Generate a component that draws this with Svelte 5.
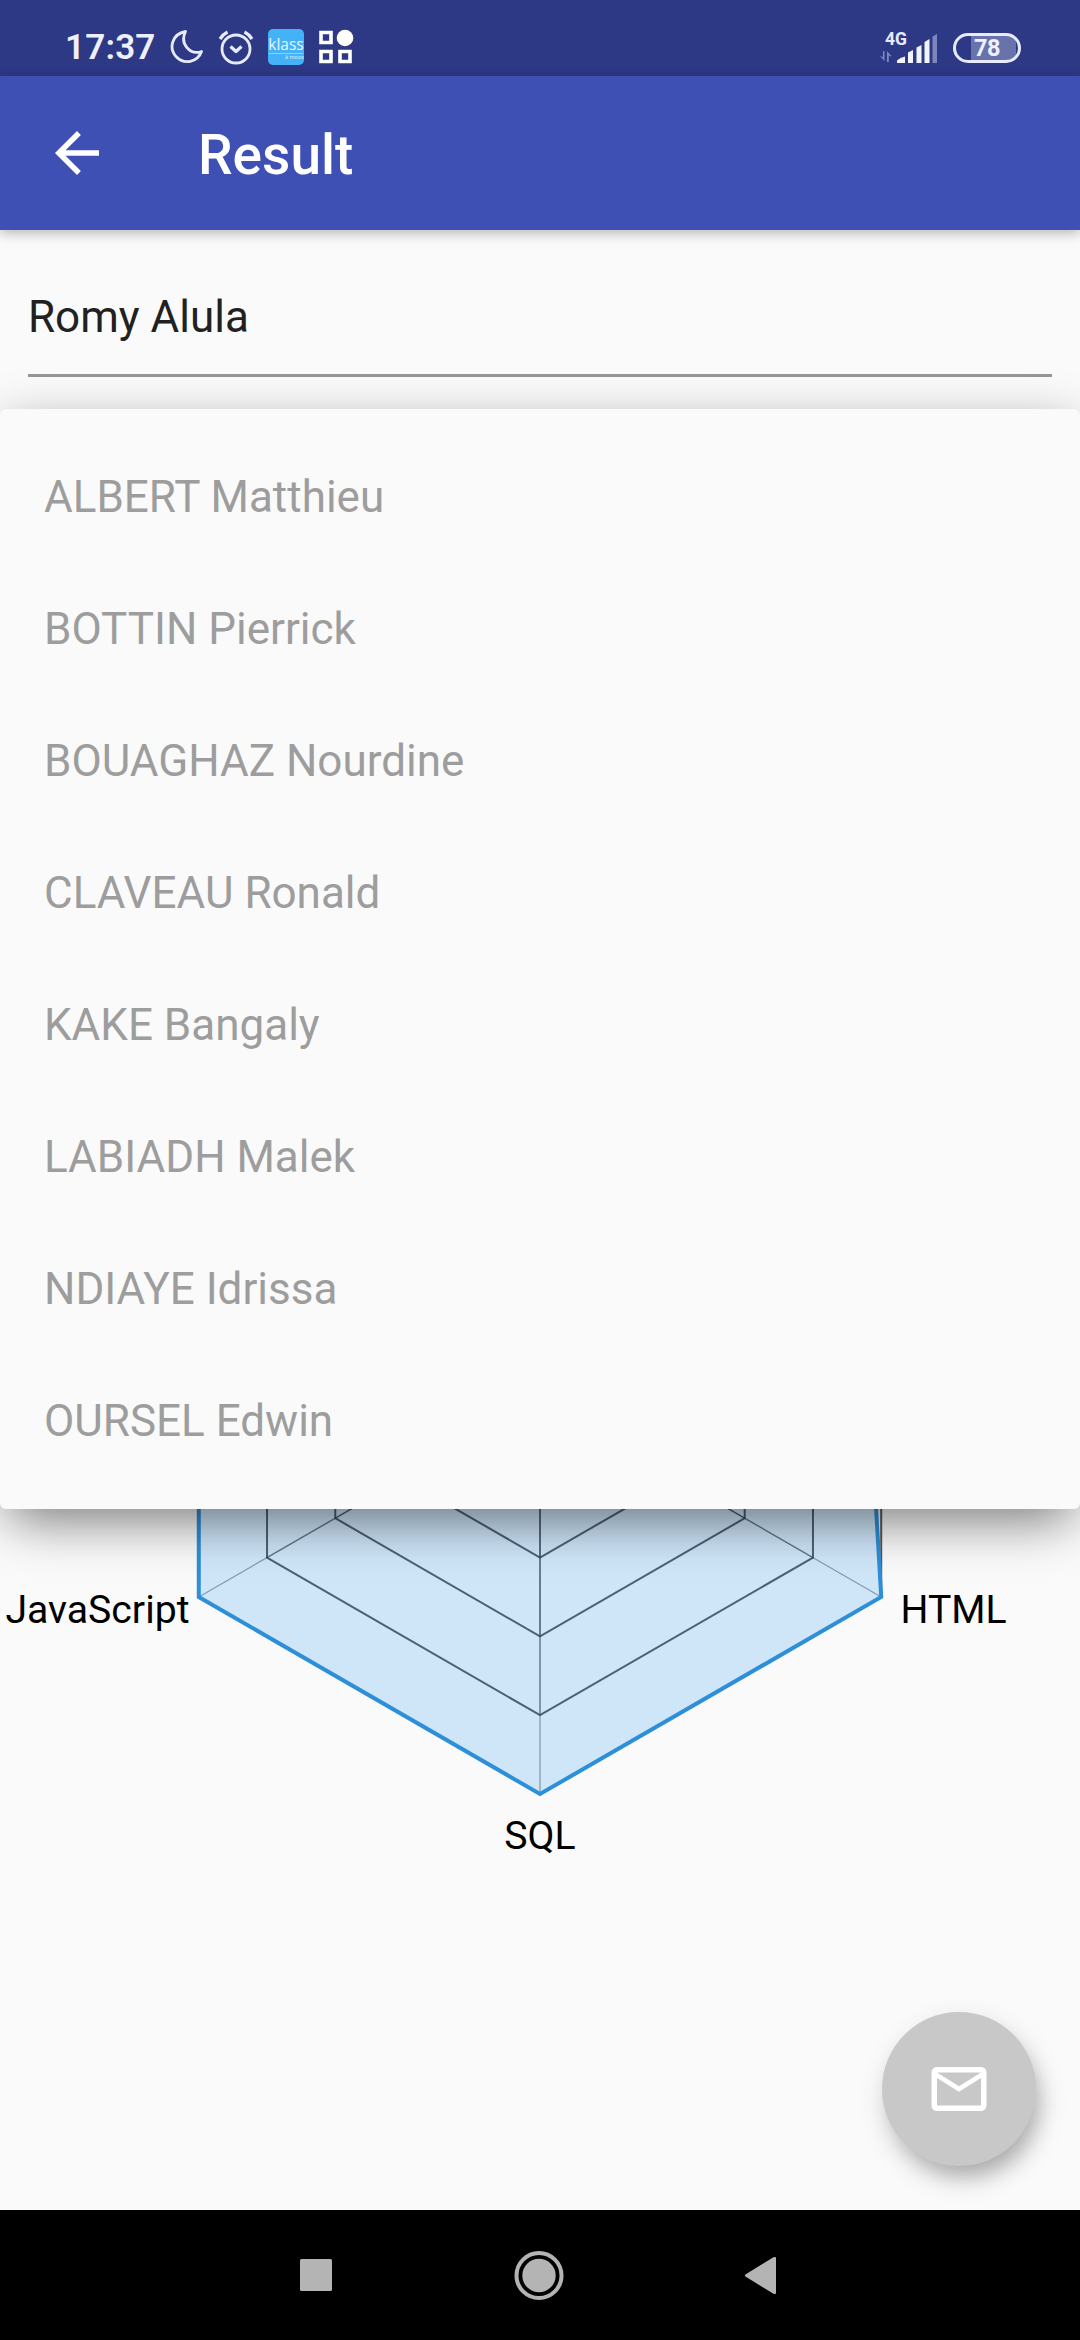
<script>
  const names = [
    'ALBERT Matthieu',
    'BOTTIN Pierrick',
    'BOUAGHAZ Nourdine',
    'CLAVEAU Ronald',
    'KAKE Bangaly',
    'LABIADH Malek',
    'NDIAYE Idrissa',
    'OURSEL Edwin',
  ];

  // Radar geometry: six axes, five rings, coordinates local to the chart svg.
  const cx = 540;
  const cy = 991;
  const radius = 394;
  const rings = [1, 2, 3, 4, 5];
  const scores = [1, 0.935, 1, 1, 1, 1];

  function point(axis, ratio) {
    const a = (axis * Math.PI) / 3 - Math.PI / 2;
    return [cx + Math.cos(a) * radius * ratio, cy + Math.sin(a) * radius * ratio];
  }
  const polygon = (values) => values.map((v, i) => point(i, v).join(',')).join(' ');
  const axes = [0, 1, 2, 3, 4, 5];
</script>

<div class="screen">
  <header class="status">
    <div class="status-left">
      <span class="clock">17:37</span>
      <svg class="moon" width="34" height="36" viewBox="0 0 34 36">
        <path d="M15.500 2.500C2 5 -1.500 19 6 27.500C14 36 27.500 33.500 31.500 22.500C20 26.500 9.500 15 15.500 2.500Z" />
      </svg>
      <svg class="alarm" width="36" height="36" viewBox="0 0 36 36">
        <circle cx="18" cy="20" r="14" />
        <path d="M12.500 17.500L18 22.500L23.500 17.500M2 10C4 7 6.500 4.500 9.500 3M34 10C32 7 29.500 4.500 26.500 3" />
      </svg>
      <div class="klass"><span>klass</span><i></i><small>à moov</small></div>
      <svg class="apps" width="36" height="36" viewBox="0 0 36 36">
        <path d="M3 3.500H13V13.500H3ZM3 22.500H13V32.500H3ZM22 22.500H32V32.500H22Z" />
        <circle cx="27" cy="9" r="8.300" />
      </svg>
    </div>
    <div class="status-right">
      <svg width="60" height="46" viewBox="0 -10 60 46">
        <text x="7" y="14.500" class="net">4G</text>
        <path class="dim" d="M2 26L6.500 31V21H5V27ZM9 21L13.500 26L12 26.500L10.800 25V32H9Z" />
        <path class="bar" d="M19 33V30.500Q22 27.500 27 26.500V33ZM30 33V22.500L35 20V33ZM38.500 33V17.500L43.500 15V33ZM46.500 33V12L51.500 9V33Z" />
        <path class="dim" d="M54.500 33V6.500L59 4V33Z" />
      </svg>
      <div class="battery"><b>78</b></div>
    </div>
  </header>

  <div class="appbar">
    <svg width="66" height="66" viewBox="0 0 24 24">
      <path d="M20 11H7.830l5.590-5.590L12 4l-8 8 8 8 1.410-1.410L7.830 13H20v-2z" />
    </svg>
    <h1>Result</h1>
  </div>

  <main>
    <div class="field">Romy Alula</div>
    <section class="chart-area">
      <svg class="chart" width="1080" height="1801" viewBox="0 0 1080 1801">
        {#each rings as r}
          <polygon class="ring" points={polygon(axes.map(() => r / 5))} />
        {/each}
        {#each axes as a}
          {#each rings as r}
            <line class="spoke" x1={cx} y1={cy} x2={point(a, r / 5)[0]} y2={point(a, r / 5)[1]} />
          {/each}
        {/each}
        <polygon class="area" points={polygon(scores)} />
        <text x="189.500" y="1214" text-anchor="end">JavaScript</text>
        <text x="900.500" y="1214">HTML</text>
        <text x="540" y="1440" text-anchor="middle">SQL</text>
      </svg>
      <ul class="menu">
        {#each names as name}
          <li>{name}</li>
        {/each}
      </ul>
    </section>
    <button class="fab" aria-label="Send by mail">
      <svg width="66" height="66" viewBox="0 0 24 24">
        <path d="M20 4H4c-1.100 0-1.990.9-1.990 2L2 18c0 1.100.9 2 2 2h16c1.100 0 2-.9 2-2V6c0-1.100-.9-2-2-2zm0 14H4V8l8 5 8-5v10zm-8-7L4 6h16l-8 5z" />
      </svg>
    </button>
  </main>

  <nav>
    <svg width="50" height="50" viewBox="0 0 50 50"><rect x="9" y="9" width="32" height="32" rx="1.500" /></svg>
    <svg width="50" height="50" viewBox="0 0 50 50">
      <circle cx="25" cy="25.500" r="16.700" />
      <circle class="outline" cx="25" cy="25.500" r="22.500" />
    </svg>
    <svg width="50" height="50" viewBox="0 0 50 50"><path d="M9.800 24.200L37.500 7.300Q40 6.500 40 8V43Q40 44.500 37.500 43.700L9.800 26.800Q8 25.500 9.800 24.200Z" /></svg>
  </nav>
</div>

<style>
  :global(body) {
    margin: 0;
    background: #fafafa;
  }
  .screen {
    width: 1080px;
    height: 2340px;
    display: flex;
    flex-direction: column;
    overflow: hidden;
    background: #fafafa;
    font-family: Roboto, sans-serif;
  }
  svg {
    display: block;
    flex: none;
  }
  .status {
    box-sizing: border-box;
    height: 76px;
    flex: none;
    padding: 18px 59px 0 65px;
    display: flex;
    justify-content: space-between;
    background: #2d3985;
    color: #eef0ff;
  }
  .status-left,
  .status-right {
    display: flex;
    align-items: center;
    height: 58px;
  }
  .clock {
    width: 105px;
    padding-top: 2px;
    font-size: 35px;
    line-height: 58px;
    font-weight: 600;
    letter-spacing: 0.2px;
  }
  .moon {
    margin-right: 14px;
  }
  .moon path,
  .alarm path,
  .alarm circle {
    fill: none;
    stroke: #e8ebff;
    stroke-width: 2.8;
    stroke-linejoin: round;
  }
  .alarm path {
    stroke-width: 3.2;
  }
  .klass {
    width: 36px;
    height: 36px;
    margin: 0 14px;
    border-radius: 5px;
    background: #43b2f6;
    color: #e6f6ff;
    display: flex;
    flex-direction: column;
    align-items: center;
    overflow: hidden;
  }
  .klass span {
    margin-top: 7px;
    font: 400 15.5px/17px "Open Sans", sans-serif;
  }
  .klass i {
    width: 34px;
    height: 1px;
    flex: none;
    background: #8ed2fa;
  }
  .klass small {
    align-self: flex-end;
    font: 400 5.5px/6px "Open Sans", sans-serif;
  }
  .apps path {
    fill: none;
    stroke: #fff;
    stroke-width: 3.6;
  }
  .apps circle {
    fill: #fff;
  }
  .status-right {
    gap: 15px;
    padding-top: 1px;
  }
  .status-right svg {
    margin-top: -10px;
  }
  .net {
    font-size: 17.5px;
    font-weight: 700;
    fill: #e8ebff;
  }
  .bar {
    fill: #f1f3ff;
  }
  .dim {
    fill: #7d87bd;
  }
  .battery {
    box-sizing: border-box;
    width: 68px;
    height: 30px;
    border: 3px solid #e8ebff;
    border-radius: 15px;
    display: flex;
    align-items: center;
    justify-content: center;
    background: linear-gradient(to right, transparent 15px, #6973ab 15px 60px, transparent 60px);
  }
  .battery b {
    font-size: 23.5px;
    line-height: 24px;
    font-weight: 700;
    letter-spacing: -0.5px;
  }
  .appbar {
    box-sizing: border-box;
    height: 154px;
    flex: none;
    padding-left: 44px;
    display: flex;
    align-items: center;
    gap: 88px;
    position: relative;
    z-index: 1;
    background: #3e50b4;
    box-shadow: 0 3px 12px rgba(0, 0, 0, 0.28);
  }
  .appbar path,
  .fab path {
    fill: #fff;
  }
  h1 {
    margin: 0;
    padding-top: 4px;
    font-size: 55px;
    line-height: 64px;
    font-weight: 500;
    color: #fff;
  }
  main {
    height: 1980px;
    flex: none;
    position: relative;
    display: flex;
    flex-direction: column;
    overflow: hidden;
  }
  .field {
    box-sizing: border-box;
    height: 147px;
    margin: 0 28px 32px;
    padding-top: 54px;
    border-bottom: 3px solid #969696;
    font-size: 44px;
    line-height: 66px;
    color: #212121;
  }
  .chart-area {
    position: relative;
  }
  .chart text {
    font-size: 39.2px;
    fill: #000;
  }
  .ring {
    fill: none;
    stroke: #444;
    stroke-opacity: 0.9;
    stroke-width: 2;
  }
  .spoke {
    stroke: #333;
    stroke-opacity: 0.45;
    stroke-width: 1.3;
  }
  .area {
    fill: rgba(33, 150, 243, 0.2);
    stroke: #2d8fd8;
    stroke-width: 4;
  }
  .menu {
    box-sizing: border-box;
    position: absolute;
    top: 0;
    left: 0;
    width: 1080px;
    height: 1100px;
    margin: 0;
    padding: 22px 44px;
    list-style: none;
    border-radius: 6px;
    background: #fafafa;
    box-shadow:
      0 24px 50px -12px rgba(0, 0, 0, 0.42),
      0 4px 48px rgba(0, 0, 0, 0.15);
  }
  .menu li {
    font-size: 44px;
    line-height: 132px;
    height: 132px;
    color: #9d9d9d;
  }
  .fab {
    position: absolute;
    right: 44px;
    bottom: 44px;
    width: 154px;
    height: 154px;
    padding: 0;
    border: 0;
    border-radius: 50%;
    display: flex;
    align-items: center;
    justify-content: center;
    background: #c8c8c8;
    box-shadow:
      6px 14px 20px -4px rgba(0, 0, 0, 0.22),
      4px 12px 30px rgba(0, 0, 0, 0.14);
  }
  nav {
    box-sizing: border-box;
    height: 130px;
    flex: none;
    padding: 0 294px 0 291px;
    display: flex;
    align-items: center;
    justify-content: space-between;
    background: #000;
  }
  nav svg {
    fill: #b4b4b4;
  }
  nav .outline {
    fill: none;
    stroke: #b4b4b4;
    stroke-width: 4;
  }
</style>
